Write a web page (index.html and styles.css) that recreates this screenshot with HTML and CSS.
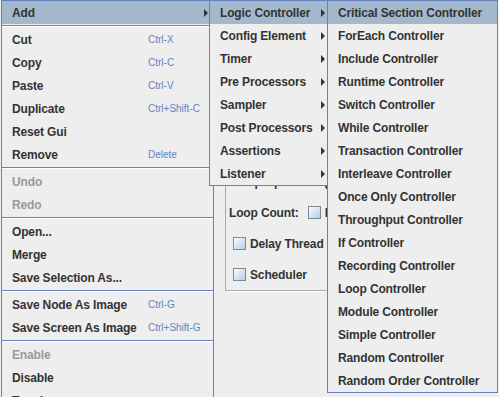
FILE: index.html
```html
<!DOCTYPE html>
<html>
<head>
<meta charset="utf-8">
<link rel="stylesheet" href="styles.css">
</head>
<body>
<div class="frame">
  <div class="group">
    <div class="row"><span class="lead">Ramp-Up Period (seconds):</span></div>
    <div class="row"><span class="lead">Loop Count:</span><span class="cb"></span><span>Forever</span></div>
    <div class="row indent"><span class="cb"></span><span>Delay Thread creation until needed</span></div>
    <div class="row indent"><span class="cb"></span><span>Scheduler</span></div>
  </div>
</div>

<div class="menu m1">
  <div class="item active"><span class="label">Add</span><span class="arrow"></span></div>
  <div class="sep"></div>
  <div class="item"><span class="label">Cut</span><span class="accel">Ctrl-X</span></div>
  <div class="item"><span class="label">Copy</span><span class="accel">Ctrl-C</span></div>
  <div class="item"><span class="label">Paste</span><span class="accel">Ctrl-V</span></div>
  <div class="item"><span class="label">Duplicate</span><span class="accel">Ctrl+Shift-C</span></div>
  <div class="item"><span class="label">Reset Gui</span></div>
  <div class="item"><span class="label">Remove</span><span class="accel">Delete</span></div>
  <div class="sep"></div>
  <div class="item disabled"><span class="label">Undo</span></div>
  <div class="item disabled"><span class="label">Redo</span></div>
  <div class="sep"></div>
  <div class="item"><span class="label">Open...</span></div>
  <div class="item"><span class="label">Merge</span></div>
  <div class="item"><span class="label">Save Selection As...</span></div>
  <div class="sep"></div>
  <div class="item"><span class="label">Save Node As Image</span><span class="accel">Ctrl-G</span></div>
  <div class="item"><span class="label">Save Screen As Image</span><span class="accel">Ctrl+Shift-G</span></div>
  <div class="sep"></div>
  <div class="item disabled"><span class="label">Enable</span></div>
  <div class="item"><span class="label">Disable</span></div>
  <div class="item"><span class="label">Toggle</span></div>
</div>

<div class="menu m2">
  <div class="item active"><span>Logic Controller</span><span class="arrow"></span></div>
  <div class="item"><span>Config Element</span><span class="arrow"></span></div>
  <div class="item"><span>Timer</span><span class="arrow"></span></div>
  <div class="item"><span>Pre Processors</span><span class="arrow"></span></div>
  <div class="item"><span>Sampler</span><span class="arrow"></span></div>
  <div class="item"><span>Post Processors</span><span class="arrow"></span></div>
  <div class="item"><span>Assertions</span><span class="arrow"></span></div>
  <div class="item"><span>Listener</span><span class="arrow"></span></div>
</div>

<div class="menu m3">
  <div class="item active">Critical Section Controller</div>
  <div class="item">ForEach Controller</div>
  <div class="item">Include Controller</div>
  <div class="item">Runtime Controller</div>
  <div class="item">Switch Controller</div>
  <div class="item">While Controller</div>
  <div class="item">Transaction Controller</div>
  <div class="item">Interleave Controller</div>
  <div class="item">Once Only Controller</div>
  <div class="item">Throughput Controller</div>
  <div class="item">If Controller</div>
  <div class="item">Recording Controller</div>
  <div class="item">Loop Controller</div>
  <div class="item">Module Controller</div>
  <div class="item">Simple Controller</div>
  <div class="item">Random Controller</div>
  <div class="item">Random Order Controller</div>
</div>
</body>
</html>
```

FILE: styles.css
```css
html, body {
  margin: 0;
  padding: 0;
}
body {
  width: 499px;
  height: 397px;
  overflow: hidden;
  position: relative;
  background: #eeeeee;
  font-family: "Liberation Sans", Arial, sans-serif;
  color: #333333;
}

/* background panel */
.frame {
  padding: 165px 0 0 225px;
}
.group {
  width: 270px;
  overflow: hidden;
  border: 1px solid #a8a8a8;
  box-shadow: 1px 1px 0 #ffffff;
}
.row {
  height: 31px;
  display: flex;
  align-items: center;
  padding-left: 3px;
  font-size: 12px;
  font-weight: bold;
  letter-spacing: -0.15px;
  white-space: nowrap;
  overflow: hidden;
}
.row.indent {
  padding-left: 7px;
}
.lead {
  margin-right: 9px;
}
.cb {
  flex: none;
  width: 13px;
  height: 13px;
  box-sizing: border-box;
  border: 1px solid #7a8a99;
  background: linear-gradient(135deg, #ffffff 0%, #dbe6f1 45%, #b8cfe5 100%);
  margin-right: 4px;
}

/* popup menus */
.menu {
  position: absolute;
  top: 0;
  box-sizing: border-box;
  background: #eeeeee;
  border: 1px solid #6382bf;
  font-size: 12px;
  font-weight: bold;
  letter-spacing: -0.15px;
  color: #333333;
}
.m1 {
  left: 1px;
  width: 213px;
}
.m2 {
  left: 209px;
  width: 119px;
}
.m3 {
  left: 327px;
  width: 171px;
}
.item {
  height: 23px;
  display: flex;
  align-items: center;
  padding-left: 10px;
  white-space: nowrap;
}
.item.active {
  background: #a3b8cc;
}
.item.disabled {
  color: #999999;
}
.m1 .label {
  flex: none;
  width: 136px;
}
.accel {
  font-size: 10px;
  font-weight: normal;
  letter-spacing: 0;
  color: #6382bf;
}
.arrow {
  margin-left: auto;
  width: 0;
  height: 0;
  border-left: 4px solid #333333;
  border-top: 4px solid transparent;
  border-bottom: 4px solid transparent;
}
.m1 .arrow {
  margin-right: 5px;
}
.m2 .arrow {
  margin-right: 2px;
}
.sep {
  height: 1px;
  margin: 1px 0;
  background: #6382bf;
  border-bottom: 1px solid #ffffff;
}
```
